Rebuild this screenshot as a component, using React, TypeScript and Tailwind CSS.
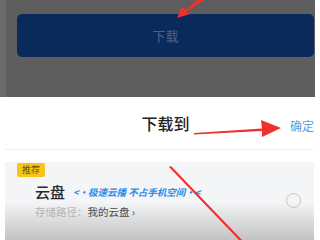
import React from "react";

const font = { fontFamily: '"Noto Sans CJK SC", "Noto Sans", sans-serif' };

function Arrows() {
  return (
    <svg className="pointer-events-none absolute inset-0" width={320} height={240} viewBox="0 0 320 240">
      {/* top arrow */}
      <polygon points="204,0 197,0 186,10 182,6 177,18 190,14 186,12" fill="#f0302c" />
      {/* title arrow */}
      <polygon points="194,133 262,128.5 261,120 281,128 262,137 262,131 194,134.5" fill="#f0302c" />
      {/* diagonal line */}
      <polygon points="169,167 171,166 242,240 239,240" fill="#f0302c" />
    </svg>
  );
}

export default function App() {
  return (
    <div className="relative h-[240px] w-[320px] overflow-hidden bg-white" style={font}>
      <div className="flex h-[97px]">
        <div className="w-[6px] bg-[#6a6a6a]" />
        <div className="flex-1 bg-[#5e5e5e] pl-[11px] pt-[14px]">
          <div className="flex h-[43px] w-[297px] items-center justify-center rounded-[5px] bg-[#0b2a5c] text-[13px] text-[#4e6282]">
            下载
          </div>
        </div>
        <div className="w-[5px] bg-white" />
      </div>

      <div className="ml-[5px] w-[309px] bg-white">
        <div className="relative flex h-[53px] items-center justify-center border-b border-[#f0f0f0]">
          <span className="ml-[12px] text-[16px] font-medium text-[#222]">下载到</span>
          <span className="absolute right-[0px] top-[23px] text-[12px] leading-none text-[#5b9be3]">确定</span>
        </div>

        <div className="mt-[12px] h-[80px] bg-gradient-to-b from-[#f4f5f7] from-50% to-[#c0c0c0]">
          <div className="flex pl-[12px] pt-[1px]">
            <span className="rounded-[2px] bg-[#f6c517] px-[5px] text-[9px] leading-[14px] text-[#6b5310]">推荐</span>
          </div>
          <div className="flex items-center pl-[30px] pr-[13px] pt-[5px]">
            <div className="flex-1">
              <div className="flex items-center gap-[8px]">
                <span className="text-[15px] font-medium leading-[20px] text-[#2a2a2a]">云盘</span>
                <span className="text-[9.5px] font-bold italic text-[#2d8be6]">&lt;·极速云播 不占手机空间·&lt;</span>
              </div>
              <div className="mt-[3px] text-[10.5px] leading-[14px]">
                <span className="text-[#b3b3b3]">存储路径：</span>
                <span className="text-[#4a4a4a]">我的云盘 ›</span>
              </div>
            </div>
            <div className="h-[15px] w-[15px] rounded-full border border-[#c4c4c4]" />
          </div>
        </div>
      </div>

      <Arrows />
    </div>
  );
}
